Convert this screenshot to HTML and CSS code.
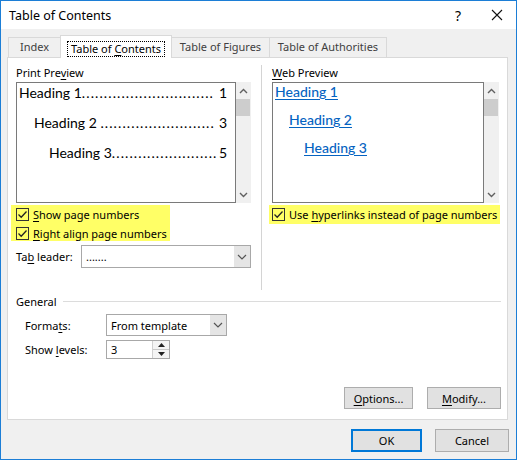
FILE: index.html
```html
<!DOCTYPE html>
<html>
<head>
<meta charset="utf-8">
<title>Table of Contents</title>
<link rel="stylesheet" href="styles.css">
</head>
<body>
<div class="window">
  <div class="titlebar">
    <span class="title">Table of Contents</span>
    <span class="help">?</span>
    <span class="close"><svg width="12" height="12" viewBox="0 0 12 12"><path d="M1 1L11 11M11 1L1 11" stroke="#111" stroke-width="1.1" fill="none"/></svg></span>
  </div>
  <div class="content">
    <div class="tabs">
      <div class="tab t-index">Index</div>
      <div class="tab active t-toc"><span class="focus">Table of <u>C</u>ontents</span></div>
      <div class="tab t-fig">Table of Figures</div>
      <div class="tab t-auth">Table of Authorities</div>
    </div>
    <div class="panel">
      <div class="cols">
        <div class="col left">
          <div class="lbl">Print Pre<u>v</u>iew</div>
          <div class="preview">
            <div class="pbox">
              <div class="entry l1"><span>Heading 1</span><span class="dots">..............................</span><span class="num">1</span></div>
              <div class="entry l2"><span>Heading 2&nbsp;</span><span class="dots">..........................</span><span class="num">3</span></div>
              <div class="entry l3"><span>Heading 3</span><span class="dots">........................</span><span class="num">5</span></div>
            </div>
            <div class="scroll">
              <div class="arrow"><svg width="9" height="6" viewBox="0 0 9 6"><path d="M1 5L4.5 1.5L8 5" stroke="#606060" stroke-width="1.4" fill="none"/></svg></div>
              <div class="thumb"></div>
              <div class="track"></div>
              <div class="arrow"><svg width="9" height="6" viewBox="0 0 9 6"><path d="M1 1L4.5 4.5L8 1" stroke="#606060" stroke-width="1.4" fill="none"/></svg></div>
            </div>
          </div>
          <div class="hl hl-left">
            <div class="chk"><span class="box"><svg width="11" height="11" viewBox="0 0 11 11"><path d="M1.5 5.5L4.2 8.2L9.5 2.5" stroke="#222" stroke-width="1.3" fill="none"/></svg></span><span><u>S</u>how page numbers</span></div>
            <div class="chk"><span class="box"><svg width="11" height="11" viewBox="0 0 11 11"><path d="M1.5 5.5L4.2 8.2L9.5 2.5" stroke="#222" stroke-width="1.3" fill="none"/></svg></span><span><u>R</u>ight align page numbers</span></div>
          </div>
          <div class="leader">
            <span class="leader-lbl">Ta<u>b</u> leader:</span>
            <div class="combo combo-leader">
              <span class="val">.......</span>
              <span class="drop"><svg width="10" height="6" viewBox="0 0 10 6"><path d="M1 1L5 5L9 1" stroke="#555" stroke-width="1.2" fill="none"/></svg></span>
            </div>
          </div>
        </div>
        <div class="divider"></div>
        <div class="col right">
          <div class="lbl"><u>W</u>eb Preview</div>
          <div class="preview">
            <div class="wbox">
              <div class="link w1">Heading 1</div>
              <div class="link w2">Heading 2</div>
              <div class="link w3">Heading 3</div>
            </div>
            <div class="scroll">
              <div class="arrow"><svg width="9" height="6" viewBox="0 0 9 6"><path d="M1 5L4.5 1.5L8 5" stroke="#606060" stroke-width="1.4" fill="none"/></svg></div>
              <div class="thumb"></div>
              <div class="track"></div>
              <div class="arrow"><svg width="9" height="6" viewBox="0 0 9 6"><path d="M1 1L4.5 4.5L8 1" stroke="#606060" stroke-width="1.4" fill="none"/></svg></div>
            </div>
          </div>
          <div class="hl hl-right">
            <div class="chk"><span class="box"><svg width="11" height="11" viewBox="0 0 11 11"><path d="M1.5 5.5L4.2 8.2L9.5 2.5" stroke="#222" stroke-width="1.3" fill="none"/></svg></span><span>Use <u>h</u>yperlinks instead of page numbers</span></div>
          </div>
        </div>
      </div>
      <div class="general-head"><span>General</span><span class="gline"></span></div>
      <div class="frow frow-formats">
        <span class="flbl">Forma<u>t</u>s:</span>
        <div class="combo combo-formats">
          <span class="val">From template</span>
          <span class="drop"><svg width="10" height="6" viewBox="0 0 10 6"><path d="M1 1L5 5L9 1" stroke="#555" stroke-width="1.2" fill="none"/></svg></span>
        </div>
      </div>
      <div class="frow frow-levels">
        <span class="flbl">Show <u>l</u>evels:</span>
        <div class="spin">
          <span class="val">3</span>
          <span class="spinbtns">
            <span class="sb"><svg width="7" height="4" viewBox="0 0 7 4"><path d="M0 4L3.5 0L7 4Z" fill="#222"/></svg></span>
            <span class="sb"><svg width="7" height="4" viewBox="0 0 7 4"><path d="M0 0L3.5 4L7 0Z" fill="#222"/></svg></span>
          </span>
        </div>
      </div>
      <div class="pbuttons">
        <div class="btn btn-options"><u>O</u>ptions...</div>
        <div class="btn btn-modify"><u>M</u>odify...</div>
      </div>
    </div>
    <div class="footer">
      <div class="btn btn-ok">OK</div>
      <div class="btn btn-cancel">Cancel</div>
    </div>
  </div>
</div>
</body>
</html>
```
FILE: styles.css
```css
html, body {
  margin: 0;
  padding: 0;
  background: #ffffff;
}
body {
  font-family: "Noto Sans", "Open Sans", sans-serif;
  font-size: 11px;
  color: #000;
}
u { text-decoration: underline; text-underline-offset: 2px; }

.window {
  width: 517px;
  height: 460px;
  box-sizing: border-box;
  border: 1px solid #1c7ed6;
  background: #f0f0f0;
  display: flex;
  flex-direction: column;
}

.titlebar {
  height: 28px;
  flex: none;
  background: #ffffff;
  display: flex;
  align-items: center;
  padding-left: 8px;
}
.title { font-size: 12.5px; color: #000; }
.help {
  margin-left: auto;
  width: 40px;
  text-align: center;
  font-size: 14px;
}
.close {
  width: 38px;
  display: flex;
  justify-content: center;
  align-items: center;
}

.content {
  flex: 1;
  display: flex;
  flex-direction: column;
  padding-left: 6px;
}

.tabs {
  display: flex;
  align-items: flex-end;
  height: 22px;
  margin-top: 6px;
  padding-left: 1px;
}
.tab {
  height: 20px;
  box-sizing: border-box;
  border: 1px solid #d9d9d9;
  border-bottom: none;
  line-height: 18px;
  text-align: center;
  color: #404040;
  background: #f0f0f0;
  white-space: nowrap;
}
.tab + .tab { margin-left: -1px; }
.t-index { width: 53px; }
.t-toc { width: 112px; }
.t-fig { width: 99px; }
.t-auth { width: 118px; }
.tab.active {
  height: 23px;
  background: #fff;
  color: #000;
  margin-bottom: -1px;
  position: relative;
  z-index: 1;
  line-height: 13px;
}
.focus {
  display: inline-block;
  margin-top: 5px;
  border: 1px dotted #000;
  padding: 0 3px 1px;
}

.panel {
  width: 501px;
  height: 363px;
  box-sizing: border-box;
  background: #fff;
  border: 1px solid #d9d9d9;
  padding: 7px 6px 0 8px;
  display: flex;
  flex-direction: column;
}

.cols { display: flex; }
.col { display: flex; flex-direction: column; }
.col.left { width: 236px; }
.col.right { width: 227px; margin-left: 10px; }
.divider {
  width: 1px;
  height: 225px;
  background: #d4d4d4;
  margin-left: 9px;
}

.lbl { height: 17px; line-height: 16px; }

.preview { display: flex; height: 121px; }
.pbox {
  width: 220px;
  box-sizing: border-box;
  border: 1px solid #7a7a7a;
  padding: 0 8px 0 2px;
  font-family: Lato, "Noto Sans", sans-serif;
  font-size: 14px;
}
.entry {
  display: flex;
  height: 20px;
  line-height: 20px;
  margin-bottom: 10px;
  white-space: nowrap;
}
.l2 { padding-left: 15px; }
.l3 { padding-left: 30px; }
.dots { letter-spacing: 1.1px; }
.num { margin-left: auto; }

.wbox {
  width: 212px;
  box-sizing: border-box;
  border: 1px solid #7a7a7a;
  padding: 0 2px;
  font-family: Lato, "Noto Sans", sans-serif;
  font-size: 14px;
}
.link {
  height: 18px;
  line-height: 18px;
  margin-bottom: 10px;
  color: #0563c1;
  text-decoration: underline;
  text-underline-offset: 2px;
  font-weight: 500;
}
.w2 { padding-left: 14px; }
.w3 { padding-left: 29px; }

.scroll {
  width: 15px;
  background: #f0f0f0;
  display: flex;
  flex-direction: column;
}
.arrow {
  height: 17px;
  display: flex;
  align-items: center;
  justify-content: center;
}
.thumb { height: 17px; background: #cdcdcd; margin-right: 1px; }
.track { flex: 1; }

.hl {
  align-self: flex-start;
  background: #ffff66;
  display: flex;
  flex-direction: column;
  gap: 3px;
  margin-top: 2px;
  white-space: nowrap;
}
.hl-left { margin-left: -5px; padding: 1px 3px 0 5px; }
.hl-right { margin-left: -3px; padding: 1px 3px 2px 3px; }
.chk { display: flex; align-items: center; height: 16px; }
.box {
  width: 13px;
  height: 13px;
  box-sizing: border-box;
  border: 1px solid #333;
  margin-right: 4px;
  display: flex;
  align-items: center;
  justify-content: center;
}

.leader {
  display: flex;
  align-items: center;
  height: 23px;
  margin-top: 4px;
}
.leader-lbl { width: 65px; }
.combo {
  display: flex;
  box-sizing: border-box;
  border: 1px solid #a8a8a8;
  background: #fff;
}
.combo .val { flex: 1; padding-left: 4px; display: flex; align-items: center; }
.drop {
  width: 16px;
  background: #e5e5e5;
  display: flex;
  align-items: center;
  justify-content: center;
}
.combo-leader { width: 170px; height: 23px; }
.combo-formats { width: 121px; height: 22px; }

.general-head {
  display: flex;
  align-items: center;
  height: 16px;
  margin-top: 3px;
}
.gline { flex: 1; height: 1px; background: #dcdcdc; margin-left: 6px; }

.frow { display: flex; align-items: center; }
.flbl { width: 81px; padding-left: 9px; }
.frow-formats { margin-top: 5px; height: 22px; }
.frow-levels { margin-top: 4px; height: 19px; }

.spin {
  width: 64px;
  height: 19px;
  box-sizing: border-box;
  border: 1px solid #a8a8a8;
  display: flex;
}
.spin .val { flex: 1; padding-left: 4px; line-height: 17px; }
.spinbtns {
  width: 16px;
  display: flex;
  flex-direction: column;
  border-left: 1px solid #d0d0d0;
  background: #f4f4f4;
}
.sb { flex: 1; display: flex; align-items: center; justify-content: center; }
.sb + .sb { border-top: 1px solid #c8c8c8; }

.pbuttons {
  display: flex;
  justify-content: flex-end;
  gap: 14px;
  margin-top: 28px;
}
.btn {
  box-sizing: border-box;
  background: #e1e1e1;
  border: 1px solid #adadad;
  display: flex;
  align-items: center;
  justify-content: center;
}
.btn-options { width: 69px; height: 22px; }
.btn-modify { width: 74px; height: 22px; }

.footer {
  display: flex;
  justify-content: flex-end;
  gap: 13px;
  margin-top: 9px;
  padding-right: 7px;
}
.btn-ok { width: 71px; height: 23px; border: 2px solid #0078d7; }
.btn-cancel { width: 74px; height: 23px; }
```
